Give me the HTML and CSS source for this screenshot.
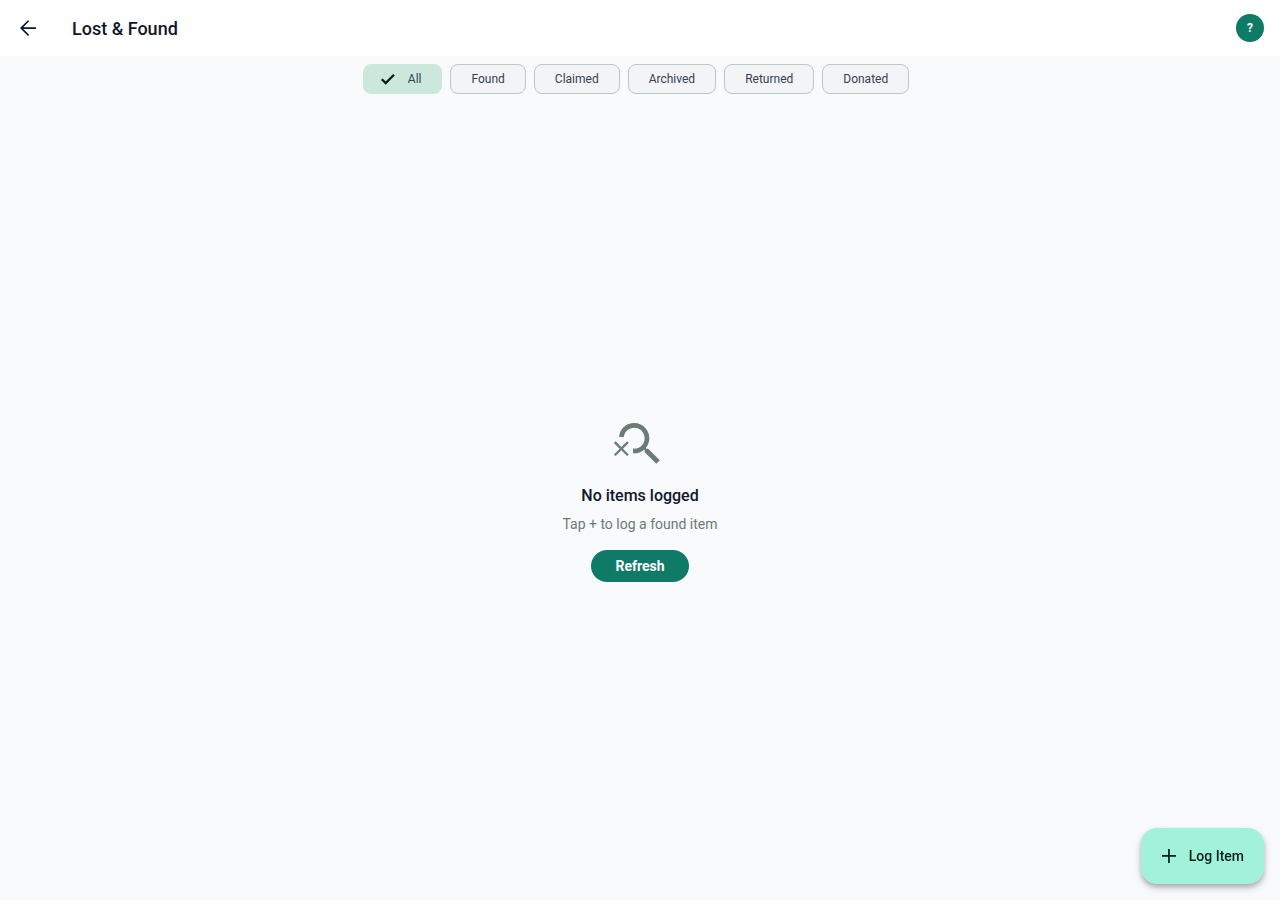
FILE: index.html
```
<!DOCTYPE html>
<html lang="en">
<head>
<meta charset="utf-8">
<meta name="viewport" content="width=device-width, initial-scale=1">
<title>Lost &amp; Found</title>
<link rel="stylesheet" href="styles.css">
</head>
<body>
<header class="app-bar">
  <button class="back" type="button" aria-label="Back">
    <svg width="24" height="24" viewBox="0 0 24 24" aria-hidden="true"><path d="M20 11.2H7.3l5.85-5.85L12 4.2l-8 7.8 8 8 1.15-1.15L7.3 12.9H20v-1.7z"/></svg>
  </button>
  <h1 class="title">Lost &amp; Found</h1>
  <button class="help" type="button">?</button>
</header>
<nav class="filters" aria-label="Status">
  <button class="chip chip-selected" type="button" aria-pressed="true">
    <svg width="18" height="18" viewBox="0 0 18 18" aria-hidden="true"><path d="M2.8 9.2l3.9 3.9 8.3-8.3" fill="none" stroke="currentColor" stroke-width="2.3"/></svg>
    All
  </button>
  <button class="chip" type="button" aria-pressed="false">Found</button>
  <button class="chip" type="button" aria-pressed="false">Claimed</button>
  <button class="chip" type="button" aria-pressed="false">Archived</button>
  <button class="chip" type="button" aria-pressed="false">Returned</button>
  <button class="chip" type="button" aria-pressed="false">Donated</button>
</nav>
<main class="empty">
  <svg class="empty-icon" width="56" height="56" viewBox="0 0 24 24" aria-hidden="true"><path d="M15.5 14h-.79l-.28-.27C15.41 12.59 16 11.11 16 9.5 16 5.91 13.09 3 9.5 3 6.08 3 3.28 5.64 3.03 9h2.02C5.3 6.75 7.18 5 9.5 5 11.99 5 14 7.01 14 9.5S11.99 14 9.5 14c-.17 0-.33-.03-.5-.05v2.02c.17.02.33.03.5.03 1.61 0 3.09-.59 4.23-1.57l.27.28v.79l5 4.99L20.49 19l-4.99-5z"/><path d="M6.47 10.82L4 13.29l-2.47-2.47-.71.71L3.29 14 .82 16.47l.71.71L4 14.71l2.47 2.47.71-.71L4.71 14l2.47-2.47z"/></svg>
  <h2 class="empty-title">No items logged</h2>
  <p class="empty-text">Tap + to log a found item</p>
  <button class="refresh" type="button">Refresh</button>
</main>
<button class="fab" type="button">
  <svg width="24" height="24" viewBox="0 0 24 24" aria-hidden="true"><path d="M19 12.8h-6.2V19h-1.7v-6.2H5v-1.7h6.1V5h1.7v6.1H19z"/></svg>
  Log Item
</button>
</body>
</html>
```
FILE: styles.css
```
* {
  box-sizing: border-box;
}

body {
  margin: 0;
  min-height: 100vh;
  display: flex;
  flex-direction: column;
  background: #f8fafc;
  color: #0f172a;
  font-family: Roboto, "Liberation Sans", sans-serif;
}

button {
  border: 0;
  padding: 0;
  font: inherit;
  color: inherit;
  cursor: pointer;
}

svg {
  display: block;
  fill: currentColor;
}

.app-bar {
  display: flex;
  align-items: center;
  height: 56px;
  padding: 0 16px 0 8px;
  background: #fff;
}

.back {
  display: grid;
  place-items: center;
  width: 40px;
  height: 40px;
  background: none;
}

.title {
  flex: 1;
  margin: 0 0 0 24px;
  padding-top: 2px;
  font-size: 18px;
  line-height: 24px;
  font-weight: 500;
}

.help {
  width: 28px;
  height: 28px;
  border-radius: 50%;
  background: #0f7b66;
  color: #fff;
  font-size: 12px;
  font-weight: 700;
}

.filters {
  display: flex;
  justify-content: center;
  gap: 8px;
  padding: 8px 16px 8px 8px;
}

.chip {
  display: flex;
  align-items: center;
  gap: 11px;
  height: 30px;
  padding: 0 20px;
  border: 1px solid #bac9c3;
  border-radius: 8px;
  background: #f3f4f6;
  color: #334155;
  font-size: 12px;
  line-height: 16px;
}

.chip-selected {
  padding-left: 15px;
  border-color: #cce8dc;
  background: #cce8dc;
}

.chip-selected svg {
  color: #06201a;
}

.empty {
  flex: 1;
  display: flex;
  flex-direction: column;
  align-items: center;
  justify-content: center;
  padding: 16px 16px 20px;
}

.empty-icon {
  color: #6b7b75;
}

.empty-title {
  margin: 12px 0 6px;
  font-size: 16px;
  line-height: 24px;
  font-weight: 500;
}

.empty-text {
  margin: 0 0 16px;
  color: #6b7b75;
  font-size: 14px;
  line-height: 20px;
}

.refresh {
  height: 32px;
  padding: 0 24px;
  border-radius: 16px;
  background: #0f7b66;
  color: #fff;
  font-size: 14px;
  font-weight: 700;
}

.fab {
  position: fixed;
  right: 16px;
  bottom: 16px;
  display: flex;
  align-items: center;
  gap: 8px;
  height: 56px;
  padding: 0 20px 0 16px;
  border-radius: 16px;
  background: #a2f2da;
  color: #002019;
  font-size: 14px;
  font-weight: 500;
  box-shadow: 0 3px 5px rgba(0, 0, 0, 0.22), 0 4px 10px rgba(0, 0, 0, 0.14);
}
```
